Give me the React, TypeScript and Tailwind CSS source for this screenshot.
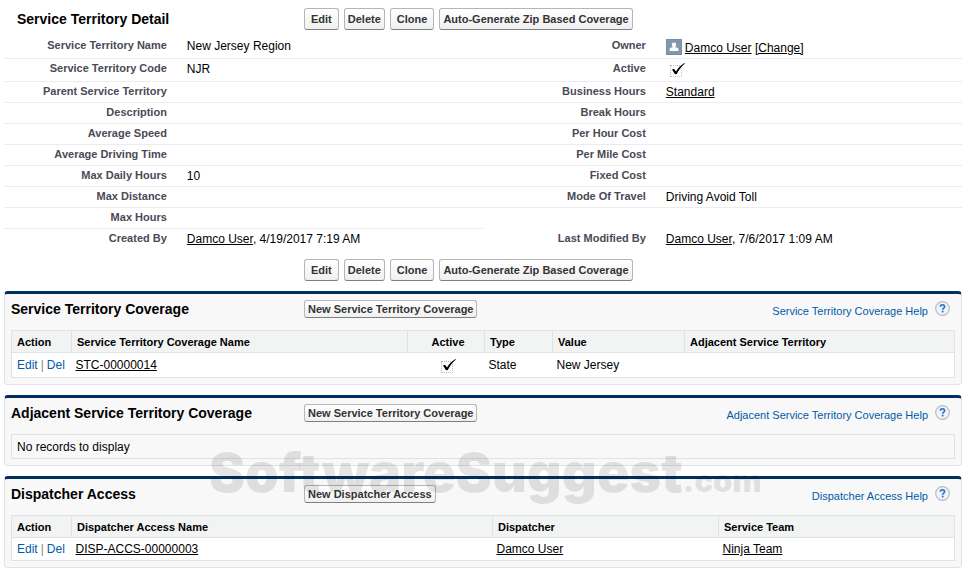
import type { ReactNode } from 'react';

type Field = { label: string; value?: ReactNode };

function TextLink({ children }: { children: ReactNode }) {
  return (
    <a href="#" className="text-black underline underline-offset-1">
      {children}
    </a>
  );
}

function Tick({ id, label }: { id: string; label: string }) {
  return (
    <span className="relative inline-block h-4 w-4 align-top">
      <input
        id={id}
        type="checkbox"
        aria-label={label}
        defaultChecked
        className="absolute top-1 left-0 m-0 h-3 w-3 appearance-none border border-dotted border-[#bdbdbd] bg-transparent"
      />
      <svg className="pointer-events-none absolute top-0 left-0 h-4 w-4 overflow-visible" viewBox="0 0 16 16" aria-hidden="true">
        <path d="M2 8.6 L4 7.8 L6 10.4 C8.4 6.8 11 4 14.4 2 L14.9 2.6 C11.6 5.4 8.8 9 6.8 13 L5 13.2 Z" fill="#000" />
      </svg>
    </span>
  );
}

function UserIcon() {
  return (
    <svg className="mr-[3px] h-4 w-4 shrink-0" viewBox="0 0 16 16" aria-hidden="true">
      <rect width="16" height="16" fill="#8199af" />
      <rect x=".5" y=".5" width="15" height="15" fill="none" stroke="#768fa6" />
      <path d="M8 3.6c1.4 0 2.2.9 2.2 2.1 0 .9-.4 1.6-1 2v.5c1.8.3 3.2.7 3.2 1.9v1.9H3.6v-1.9c0-1.2 1.4-1.6 3.2-1.9v-.5c-.6-.4-1-1.1-1-2 0-1.2.8-2.1 2.2-2.1z" fill="#fff" />
    </svg>
  );
}

function HelpIcon() {
  return (
    <svg className="mt-px h-[15px] w-[15px]" viewBox="0 0 15 15" aria-hidden="true">
      <circle cx="7.5" cy="7.5" r="6.8" fill="#f1f3f6" stroke="#b9bcc0" strokeWidth="1.2" />
      <path d="M5.4 5.8C5.4 4.5 6.3 3.9 7.5 3.9s2.1.7 2.1 1.8c0 1.4-1.9 1.5-1.9 3" fill="none" stroke="#2a78d0" strokeWidth="1.7" />
      <rect x="6.8" y="9.7" width="1.8" height="1.7" fill="#2a78d0" />
    </svg>
  );
}

const buttonBase =
  'rounded-[3px] border border-[#b5b5b5] border-b-[#7f7f7f] bg-linear-to-b from-white to-[#f0f0f0] text-[11px] leading-4 font-bold whitespace-nowrap text-[#333]';

function RecordButtons() {
  return (
    <div className="flex gap-[5px]">
      <button type="button" className={`${buttonBase} px-1.5 py-0.5`}>Edit</button>
      <button type="button" className={`${buttonBase} px-[3px] py-0.5`}>Delete</button>
      <button type="button" className={`${buttonBase} px-1.5 py-0.5`}>Clone</button>
      <button type="button" className={`${buttonBase} px-[3px] py-0.5`}>Auto-Generate Zip Based Coverage</button>
    </div>
  );
}

const leftFields: Field[] = [
  { label: 'Service Territory Name', value: 'New Jersey Region' },
  { label: 'Service Territory Code', value: 'NJR' },
  { label: 'Parent Service Territory' },
  { label: 'Description' },
  { label: 'Average Speed' },
  { label: 'Average Driving Time' },
  { label: 'Max Daily Hours', value: '10' },
  { label: 'Max Distance' },
  { label: 'Max Hours' },
  { label: 'Created By', value: <><TextLink>Damco User</TextLink>, 4/19/2017 7:19 AM</> },
];

const rightFields: (Field | null)[] = [
  {
    label: 'Owner',
    value: (
      <span className="flex pt-px">
        <UserIcon />
        <span className="pt-px"><TextLink>Damco User</TextLink> <TextLink>[Change]</TextLink></span>
      </span>
    ),
  },
  { label: 'Active', value: <span className="pl-1"><Tick id="territory-active" label="Active" /></span> },
  { label: 'Business Hours', value: <TextLink>Standard</TextLink> },
  { label: 'Break Hours' },
  { label: 'Per Hour Cost' },
  { label: 'Per Mile Cost' },
  { label: 'Fixed Cost' },
  { label: 'Mode Of Travel', value: 'Driving Avoid Toll' },
  null,
  { label: 'Last Modified By', value: <><TextLink>Damco User</TextLink>, 7/6/2017 1:09 AM</> },
];

function FieldCell({ field, last, tall }: { field: Field | null; last: boolean; tall: boolean }) {
  if (!field) return <div />;
  return (
    <div className={`flex w-full ${tall ? 'h-[23px]' : 'h-[21px]'} ${last ? '' : 'border-b border-[#ececec]'}`}>
      <div className="w-[34%] pt-px text-right text-[11px] leading-4 font-bold text-[#4a4a56]">{field.label}</div>
      <div className="flex-1 pt-0.5 pl-5 leading-4">{field.value}</div>
    </div>
  );
}

function Panel({ title, action, help, children }: { title: string; action: string; help: string; children: ReactNode }) {
  return (
    <section className="mt-2.5 rounded-[4px] border border-t-[3px] border-[#e0e3e5] border-t-[#00305f] bg-[#f8f8f8] px-1.5 pb-1.5">
      <div className="flex h-9 items-start pt-1.5">
        <h2 className="w-[293px] text-[14px] leading-[18px] font-bold">{title}</h2>
        <button type="button" className={`${buttonBase} px-[3px]`}>{action}</button>
        <a href="#" className="ml-auto flex gap-[7px] pr-[5px] text-[11px] text-[#015ba7]">
          <span className="pt-0.5 leading-[18px]">{help}</span>
          <HelpIcon />
        </a>
      </div>
      {children}
    </section>
  );
}

const th = 'h-[22px] border border-[#e0e3e5] px-[5px] text-[11px] leading-4 font-bold';
const td = 'border-b border-[#e0e3e5] px-1 leading-4';

function RowActions() {
  return (
    <td className={`${td} text-[#8a8a6a]`}>
      <span className="flex gap-[3px] pl-px whitespace-nowrap">
        <a href="#" className="text-[#015ba7]">Edit</a>|<a href="#" className="text-[#015ba7]">Del</a>
      </span>
    </td>
  );
}

export default function App() {
  return (
    <main className="relative overflow-hidden bg-white px-1 pr-[5px] pt-2 pb-1 font-['Liberation_Sans',Arial,sans-serif] text-[12px] text-black">
      <div className="flex">
        <h1 className="w-[300px] pt-0.5 pl-[13px] text-[14px] leading-[18px] font-bold">Service Territory Detail</h1>
        <RecordButtons />
      </div>

      <div className="mt-[6px] mb-[9px]">
        {leftFields.map((field, i) => (
          <div key={field.label} className="grid grid-cols-2">
            <FieldCell field={field} last={i === 9} tall={i < 2} />
            <FieldCell field={rightFields[i]} last={i === 9} tall={i < 2} />
          </div>
        ))}
      </div>

      <div className="pl-[300px]">
        <RecordButtons />
      </div>

      <Panel title="Service Territory Coverage" action="New Service Territory Coverage" help="Service Territory Coverage Help">
        <table className="w-full table-fixed border-collapse border border-[#e0e3e5] bg-white">
          <thead className="bg-[#f2f3f3]">
            <tr>
              <th className={`${th} w-[60px] text-left`}>Action</th>
              <th className={`${th} w-[336px] text-left`}>Service Territory Coverage Name</th>
              <th className={`${th} w-[77px] text-center`}><span className="pl-1">Active</span></th>
              <th className={`${th} w-[68px] text-left`}>Type</th>
              <th className={`${th} w-[132px] text-left`}>Value</th>
              <th className={`${th} text-left`}>Adjacent Service Territory</th>
            </tr>
          </thead>
          <tbody>
            <tr className="h-[25px]">
              <RowActions />
              <td className={td}><TextLink>STC-00000014</TextLink></td>
              <td className={`${td} text-center`}><span className="pl-1.5"><Tick id="coverage-active" label="Active" /></span></td>
              <td className={td}>State</td>
              <td className={td}>New Jersey</td>
              <td className={td} />
            </tr>
          </tbody>
        </table>
      </Panel>

      <Panel title="Adjacent Service Territory Coverage" action="New Service Territory Coverage" help="Adjacent Service Territory Coverage Help">
        <p className="h-[25px] border border-[#e0e3e5] px-[5px] py-1 leading-4">No records to display</p>
      </Panel>

      <Panel title="Dispatcher Access" action="New Dispatcher Access" help="Dispatcher Access Help">
        <table className="w-full table-fixed border-collapse border border-[#e0e3e5] bg-white">
          <thead className="bg-[#f2f3f3]">
            <tr>
              <th className={`${th} w-[60px] text-left`}>Action</th>
              <th className={`${th} w-[421px] text-left`}>Dispatcher Access Name</th>
              <th className={`${th} w-[226px] text-left`}>Dispatcher</th>
              <th className={`${th} text-left`}>Service Team</th>
            </tr>
          </thead>
          <tbody>
            <tr className="h-[23px]">
              <RowActions />
              <td className={td}><TextLink>DISP-ACCS-00000003</TextLink></td>
              <td className={td}><TextLink>Damco User</TextLink></td>
              <td className={td}><TextLink>Ninja Team</TextLink></td>
            </tr>
          </tbody>
        </table>
      </Panel>

      {/* Watermark laid over the related lists */}
      <div className="pointer-events-none absolute bottom-[61px] left-[209px] flex items-baseline font-['Inter',sans-serif] leading-[60px] font-black whitespace-nowrap text-black/10">
        <span className="text-[54px]">SoftwareSuggest</span>
        <span className="text-[31px]">.com</span>
      </div>
    </main>
  );
}
